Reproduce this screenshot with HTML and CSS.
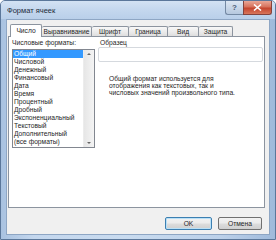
FILE: index.html
```html
<!DOCTYPE html>
<html lang="ru">
<head>
<meta charset="utf-8">
<title>Формат ячеек</title>
<link rel="stylesheet" href="styles.css">
</head>
<body>
<div class="window">
  <div class="titlebar">
    <span class="title">Формат ячеек</span>
    <div class="controls">
      <div class="ctl help">?</div>
      <div class="ctl close">
        <svg width="9" height="7" viewBox="0 0 9 7"><path d="M1 0.5 L8 6.5 M8 0.5 L1 6.5" stroke="#fff" stroke-width="1.6"/></svg>
      </div>
    </div>
  </div>
  <div class="client">
    <div class="tabs">
      <div class="tab active">Число</div>
      <div class="tab">Выравнивание</div>
      <div class="tab">Шрифт</div>
      <div class="tab">Граница</div>
      <div class="tab">Вид</div>
      <div class="tab">Защита</div>
    </div>
    <div class="panel">
      <div class="col-left">
        <div class="label">Числовые форматы:</div>
        <div class="listbox">
          <ul class="items">
            <li class="selected">Общий</li>
            <li>Числовой</li>
            <li>Денежный</li>
            <li>Финансовый</li>
            <li>Дата</li>
            <li>Время</li>
            <li>Процентный</li>
            <li>Дробный</li>
            <li>Экспоненциальный</li>
            <li>Текстовый</li>
            <li>Дополнительный</li>
            <li>(все форматы)</li>
          </ul>
          <div class="scrollbar">
            <span class="arrow up"></span>
            <span class="arrow down"></span>
          </div>
        </div>
      </div>
      <div class="col-right">
        <div class="label sample-label">Образец</div>
        <div class="sample"></div>
        <p class="desc">Общий формат используется для<br>отображения как текстовых, так и<br>числовых значений произвольного типа.</p>
      </div>
    </div>
    <div class="buttons">
      <button class="btn default ok">OK</button>
      <button class="btn cancel">Отмена</button>
    </div>
  </div>
</div>
</body>
</html>
```

FILE: styles.css
```css
* { box-sizing: border-box; }
html, body { margin: 0; padding: 0; }
body {
  width: 276px;
  height: 240px;
  overflow: hidden;
  font-family: "Liberation Sans", Arial, sans-serif;
  font-size: 6.7px;
  color: #262626;
  background: #fff;
}
.window {
  width: 276px;
  height: 240px;
  display: flex;
  flex-direction: column;
  border: 1px solid #5b779a;
  border-radius: 5px 5px 0 0;
  background: linear-gradient(90deg, #a9c2e0 0%, #c4d7ee 12%, #c9dbef 45%, #bcd1ea 80%, #9fbadb 100%);
}
.titlebar {
  height: 18px;
  display: flex;
  align-items: flex-start;
  padding: 0 3px 0 6px;
  background: linear-gradient(180deg, #d3e2f3 0%, #c4d7ee 50%, #b9cfe9 100%);
  border-radius: 4px 4px 0 0;
}
.title {
  margin-top: 5px;
  font-size: 7.5px;
  line-height: 9px;
  color: #1c2a3a;
}
.controls {
  margin-left: auto;
  display: flex;
}
.ctl {
  height: 14px;
  display: flex;
  align-items: center;
  justify-content: center;
  border: 1px solid #7489a3;
  border-top: none;
}
.help {
  width: 18px;
  border-radius: 0 0 0 3px;
  border-right: none;
  background: linear-gradient(180deg, #dce6f2 0%, #c9d7e8 50%, #b6c8de 100%);
  color: #4a5d76;
  font-size: 8px;
  font-weight: bold;
}
.close {
  width: 29px;
  border-radius: 0 0 3px 0;
  border-color: #84433d;
  background: linear-gradient(180deg, #e9a797 0%, #d7725c 45%, #c4452e 55%, #d8765c 100%);
}
.client {
  flex: 1;
  margin: 0 5px 4px 5px;
  border: 1px solid #8ea6c4;
  background: #f0f0f0;
  padding: 4px 4px 0 1px;
  display: flex;
  flex-direction: column;
}
.tabs {
  height: 12px;
  margin-left: 2px;
  display: grid;
  grid-template-columns: 32px 50px 37px 39px 31px 34px;
  align-items: end;
}
.tab {
  height: 10px;
  border: 1px solid #8c949f;
  border-bottom: none;
  border-left: none;
  background: linear-gradient(180deg, #f8f8f8 0%, #ececec 50%, #dedede 100%);
  border-radius: 2px 2px 0 0;
  display: flex;
  align-items: center;
  justify-content: center;
  line-height: 8px;
  white-space: nowrap;
}
.tab.active {
  height: 13px;
  margin-bottom: -1px;
  position: relative;
  z-index: 1;
  background: #fff;
  border-left: 1px solid #8c949f;
  padding-bottom: 1px;
}
.panel {
  height: 172px;
  border: 1px solid #8c949f;
  background: #fff;
  padding: 2px 1px 0 3px;
  display: grid;
  grid-template-columns: 83px 165px;
  column-gap: 3px;
  align-items: start;
}
.label {
  height: 8px;
  line-height: 8px;
  white-space: nowrap;
}
.listbox {
  margin-top: 2px;
  height: 99px;
  border: 1px solid #828790;
  display: flex;
}
.items {
  list-style: none;
  margin: 0;
  padding: 0;
  flex: 1;
}
.items li {
  height: 8px;
  line-height: 8px;
  padding-left: 1px;
  white-space: nowrap;
}
.items li.selected {
  background: #3399ff;
  color: #fff;
}
.scrollbar {
  width: 11px;
  background: linear-gradient(90deg, #e6e6e6, #f4f4f4);
  border-left: 1px solid #ececec;
  display: flex;
  flex-direction: column;
  justify-content: space-between;
  align-items: center;
  padding: 3px 0;
}
.arrow {
  width: 0;
  height: 0;
  border-left: 2px solid transparent;
  border-right: 2px solid transparent;
}
.arrow.up { border-bottom: 2px solid #666; }
.arrow.down { border-top: 2px solid #666; }
.sample-label {
  padding-left: 2px;
}
.sample {
  height: 15px;
  border: 1px solid #d5d9de;
  border-radius: 2px;
}
.desc {
  margin: 13px 0 0 0;
  padding-left: 11px;
  line-height: 7px;
  white-space: nowrap;
}
.buttons {
  margin-top: 9px;
  display: flex;
  justify-content: flex-end;
  gap: 6px;
  padding-right: 3px;
}
.btn {
  height: 13px;
  padding: 0;
  font-family: "Liberation Sans", Arial, sans-serif;
  font-size: 6.7px;
  color: #262626;
  border: 1px solid #707070;
  border-radius: 2px;
  background: linear-gradient(180deg, #f2f2f2 0%, #ebebeb 48%, #dddddd 52%, #cfcfcf 100%);
}
.btn.ok { width: 47px; }
.btn.cancel { width: 44px; }
.btn.default {
  border-color: #3c7fb1;
  box-shadow: inset 0 0 0 1px #b9e0f7;
}
```
